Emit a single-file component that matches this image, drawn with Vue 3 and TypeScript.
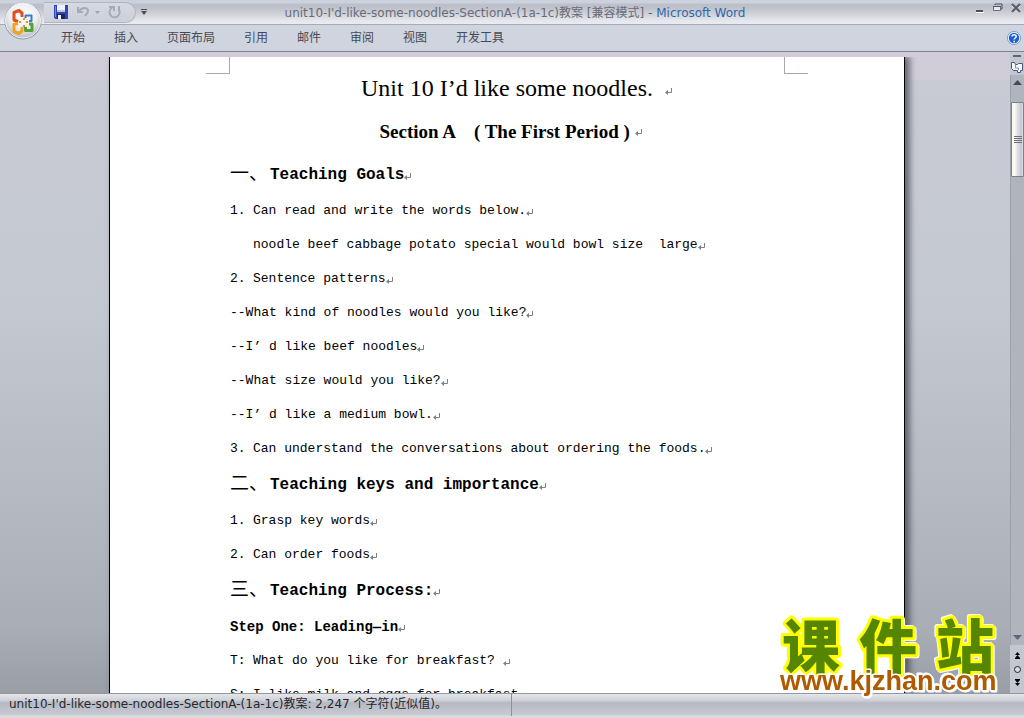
<script setup lang="ts">
import { ref } from 'vue'

type Kind = 'title' | 'section' | 'heading' | 'step' | 'line'

interface Paragraph {
  kind: Kind
  label?: string
  text: string
}

const fileName = "unit10-I'd-like-some-noodles-SectionA-(1a-1c)教案"
const tabs: string[] = ['开始', '插入', '页面布局', '引用', '邮件', '审阅', '视图', '开发工具']
const active = ref<string>('')

const paragraphs: Paragraph[] = [
  { kind: 'title', text: 'Unit 10 I’d like some noodles.' },
  { kind: 'section', text: 'Section A    ( The First Period ) ' },
  { kind: 'heading', label: '一、', text: 'Teaching Goals' },
  { kind: 'line', label: '1.', text: 'Can read and write the words below.' },
  { kind: 'line', label: ' ', text: 'noodle beef cabbage potato special would bowl size  large' },
  { kind: 'line', label: '2.', text: 'Sentence patterns' },
  { kind: 'line', text: '--What kind of noodles would you like?' },
  { kind: 'line', text: '--I’ d like beef noodles' },
  { kind: 'line', text: '--What size would you like?' },
  { kind: 'line', text: '--I’ d like a medium bowl.' },
  { kind: 'line', label: '3.', text: 'Can understand the conversations about ordering the foods.' },
  { kind: 'heading', label: '二、', text: 'Teaching keys and importance' },
  { kind: 'line', label: '1.', text: 'Grasp key words' },
  { kind: 'line', label: '2.', text: 'Can order foods' },
  { kind: 'heading', label: '三、', text: 'Teaching Process:' },
  { kind: 'step', text: 'Step One: Leading—in' },
  { kind: 'line', label: 'T:', text: 'What do you like for breakfast? ' },
  { kind: 'line', label: 'S:', text: 'I like milk and eggs for breakfast. ' },
]

const tagOf = (kind: Kind): string =>
  kind === 'title' ? 'h1' : kind === 'section' ? 'h2' : kind === 'heading' ? 'h3' : 'p'
</script>

<template>
  <div class="window">
    <header class="titlebar">
      <div class="quick">
        <button class="icon-btn" type="button" aria-label="保存">
          <svg width="14" height="14" viewBox="0 0 14 14">
            <path d="M0 0h14v14H1.500L0 12.500z" fill="#3244b8" />
            <path d="M1 1h1v11H1z" fill="#7186e0" />
            <path d="M3 0h8v7H3z" fill="#eef2fd" />
            <path d="M3 5h8v2H3z" fill="#b9c6ec" />
            <path d="M3 9h8v5H3z" fill="#1d2460" />
            <path d="M4 10h3v4H4z" fill="#f4f6fc" />
          </svg>
        </button>
        <button class="icon-btn" type="button" aria-label="撤消">
          <svg width="24" height="14" viewBox="0 0 24 14">
            <path d="M2 2v5h5M3 6c3-4 9-4 9 0 0 2-2 3-3 5" fill="none" stroke="#a4aab8" stroke-width="2" />
            <path d="M19 6h5l-2.500 3z" fill="#9da2ae" />
          </svg>
        </button>
        <button class="icon-btn" type="button" aria-label="重复">
          <svg width="14" height="14" viewBox="0 0 14 14">
            <path d="M4 3a5 5 0 1 0 7 2M6 6V2H1M11 6V1" fill="none" stroke="#a4aab8" stroke-width="2" />
          </svg>
        </button>
      </div>
      <button class="icon-btn more" type="button" aria-label="自定义快速访问工具栏">
        <svg width="6" height="6" viewBox="0 0 6 6">
          <path d="M0 0h6v1H0zM0 2h6L3 6z" fill="#4b505c" />
        </svg>
      </button>
      <div class="caption">
        <span>{{ fileName }} [兼容模式]</span>
        <span class="app-name"> - Microsoft Word</span>
      </div>
      <div class="controls">
        <button class="icon-btn" type="button" aria-label="最小化">
          <svg width="10" height="12" viewBox="0 0 10 12">
            <path d="M1 10h8v1H1z" fill="#fff" />
            <path d="M1 8h7v2H1z" fill="#4a4f5c" />
          </svg>
        </button>
        <button class="icon-btn" type="button" aria-label="还原">
          <svg width="10" height="12" viewBox="0 0 10 12">
            <path d="M2 3V2h7v5H7" fill="none" stroke="#4d5361" />
            <path d="M.5 4.500h7v4h-7z" fill="#e6eaf2" stroke="#66708a" />
            <path d="M0 4h8v1H0z" fill="#4d5361" />
          </svg>
        </button>
        <button class="icon-btn" type="button" aria-label="关闭">
          <svg width="10" height="12" viewBox="0 0 10 12">
            <path d="M1 4l8 7M9 4l-8 7" stroke="#fff" stroke-width="1" />
            <path d="M1 2l8 8M9 2l-8 8" stroke="#525a6b" stroke-width="2" />
          </svg>
        </button>
      </div>
    </header>

    <nav class="ribbon">
      <button
        v-for="tab in tabs"
        :key="tab"
        type="button"
        class="tab"
        :class="{ active: active === tab }"
        @click="active = tab"
      >{{ tab }}</button>
      <button class="icon-btn help" type="button" aria-label="帮助">
        <svg width="14" height="14" viewBox="0 0 14 14">
          <circle cx="7" cy="7" r="6.500" fill="#fff" stroke="#6e9bd0" />
          <circle cx="7" cy="7" r="5.200" fill="#1f5fd6" />
          <path d="M5 5.600c0-2.600 4.200-2.400 4.200 0C9.200 7 7.200 7 7.200 8.500" fill="none" stroke="#fff" stroke-width="1.500" />
          <circle cx="7.200" cy="10.500" r=".9" fill="#fff" />
        </svg>
      </button>
    </nav>

    <button class="office" type="button" aria-label="Office 按钮">
      <svg width="40" height="40" viewBox="0 0 40 40">
        <defs>
          <radialGradient id="orb" cx="50%" cy="35%" r="65%">
            <stop offset="0" stop-color="#ffffff" />
            <stop offset=".6" stop-color="#eceef1" />
            <stop offset="1" stop-color="#b9bdc6" />
          </radialGradient>
        </defs>
        <circle cx="20" cy="20" r="18.500" fill="#8f949e" />
        <circle cx="20" cy="19.500" r="17.500" fill="url(#orb)" stroke="#f3f4f6" />
        <g fill="none" stroke-linejoin="round">
          <path d="M19 16v-4l-3-2.500-5 2v7.500l4 1.500" stroke="#e0501d" stroke-width="3" />
          <path d="M22.500 17v-2.500h6V20H26" stroke="#3a7cc8" stroke-width="2" />
          <path d="M15 22.500l-4 1v7l5 2 3-2.500V26" stroke="#f2a01d" stroke-width="3" />
          <path d="M26 23h3v6.500h-6.500V26" stroke="#54a23a" stroke-width="3" />
          <path d="M16 21h2M23 21h2M21 17v2M21 24v2" stroke="#e8902a" stroke-width="2" />
        </g>
      </svg>
    </button>

    <main class="workspace">
      <div class="canvas">
        <article class="page">
          <i class="corner left"></i>
          <i class="corner right"></i>
          <component
            :is="tagOf(p.kind)"
            v-for="(p, i) in paragraphs"
            :key="i"
            class="para"
            :class="p.kind"
          >
            <span v-if="p.label" class="label">{{ p.label }}</span>
            <span class="text">{{ p.text }}</span>
            <svg class="mark" width="8" height="8" viewBox="0 0 8 8" aria-hidden="true">
              <path d="M6.500 0v4.500H2" fill="none" stroke="#808080" />
              <path d="M0 4.500L3 2v5z" fill="#808080" />
            </svg>
          </component>
        </article>
      </div>
      <aside class="scroll">
        <i class="split"></i>
        <button class="icon-btn view" type="button" aria-label="标尺">
          <svg width="14" height="15" viewBox="0 0 14 15">
            <path d="M1.500 2.500h3l1 2h2l1-1h4v7h-2v2h-3v-2h-4l-2-2z" fill="#f7f8fc" stroke="#46587c" />
            <path d="M5.500 5v3h3v2" fill="none" stroke="#7f90b2" />
          </svg>
        </button>
        <div class="track">
          <button class="icon-btn" type="button" aria-label="向上滚动">
            <svg width="9" height="5" viewBox="0 0 9 5"><path d="M4.500 0L9 5H0z" fill="#444a58" /></svg>
          </button>
          <div class="thumb"><i></i><i></i><i></i><i></i></div>
          <button class="icon-btn down" type="button" aria-label="向下滚动">
            <svg width="9" height="5" viewBox="0 0 9 5"><path d="M0 0h9L4.500 5z" fill="#59677f" /></svg>
          </button>
        </div>
        <div class="browse">
          <button class="icon-btn" type="button" aria-label="前一页">
            <svg width="7" height="7" viewBox="0 0 7 7"><path d="M3.500 0L6 3H1zM3.500 3L6 6H1zM1 6h5v1H1z" fill="#000" /></svg>
          </button>
          <button class="icon-btn" type="button" aria-label="选择浏览对象">
            <svg width="7" height="7" viewBox="0 0 7 7"><circle cx="3.500" cy="3.500" r="3" fill="#d9dbe0" stroke="#222" /></svg>
          </button>
          <button class="icon-btn" type="button" aria-label="下一页">
            <svg width="7" height="7" viewBox="0 0 7 7"><path d="M1 0h5v1H1zM1 1h5L3.500 4zM1 4h5L3.500 7z" fill="#000" /></svg>
          </button>
        </div>
      </aside>
    </main>

    <footer class="status">
      <span class="count">{{ fileName }}: 2,247 个字符(近似值)。</span>
    </footer>

    <svg class="brand" width="236" height="84" viewBox="0 0 236 84">
      <text class="brand-name" x="11 88 165" y="50">课件站</text>
      <text class="brand-url" x="9" y="72">www.kjzhan.com</text>
    </svg>
  </div>
</template>

<style>
body {
  background: #d6d3cc;
}
</style>

<style scoped>
.window {
  position: relative;
  display: flex;
  flex-direction: column;
  height: 100vh;
  overflow: hidden;
  font-family: "DejaVu Sans", "Noto Sans CJK SC", sans-serif;
  font-size: 12px;
  color: #4a4e5a;
}
.icon-btn {
  display: flex;
  align-items: center;
  justify-content: center;
  padding: 0;
  border: 0;
  background: none;
}
.titlebar {
  display: flex;
  flex: none;
  align-items: center;
  box-sizing: border-box;
  height: 25px;
  padding-left: 44px;
  border-bottom: 1px solid #a5aab5;
  background: linear-gradient(#ccd2dd 0 3px, #bdc0c9 4px 7px, #c8cad2 11px, #d6d8de 16px, #e4e6eb 20px, #e8ecf4 24px);
}
.quick {
  display: flex;
  flex: none;
  align-items: center;
  gap: 8px;
  box-sizing: border-box;
  width: 92px;
  height: 21px;
  padding-left: 10px;
  border: 1px solid #b2b6c1;
  border-left: 0;
  border-radius: 0 11px 11px 0;
  background: linear-gradient(#d5d9e1, #cbd0da);
}
.more {
  margin-left: 5px;
}
.caption {
  flex: 1;
  padding: 1px 92px 0 0;
  text-align: center;
  white-space: nowrap;
  line-height: 20px;
  color: #686c77;
}
.app-name {
  color: #2f68a8;
}
.controls {
  display: flex;
  gap: 8px;
  padding: 0 3px 8px 0;
}
.ribbon {
  display: flex;
  flex: none;
  align-items: center;
  gap: 29px;
  box-sizing: border-box;
  height: 27px;
  padding: 0 3px 0 61px;
  border-bottom: 1px solid #7d838e;
  background: #cfd4de;
}
.tab {
  padding: 0;
  border: 0;
  background: none;
  font: inherit;
  line-height: 20px;
  color: #454a57;
}
.tab:hover,
.tab.active {
  color: #1d4f91;
}
.help {
  margin-left: auto;
}
.office {
  position: absolute;
  top: 1px;
  left: 3px;
  padding: 0;
  border: 0;
  border-radius: 50%;
  background: none;
}
.office svg {
  display: block;
}
.workspace {
  display: flex;
  flex: 1;
  min-height: 0;
}
.canvas {
  flex: 1;
  min-width: 0;
  padding: 5px 105px 0 109px;
  overflow: hidden;
  background: linear-gradient(#d0cdd8 0 28px, #c8cbd3 28px, #c4c8d0 40%, #b2b6be 75%, #a9adb5 90%, #999da5);
}
.page {
  position: relative;
  box-sizing: border-box;
  height: 100%;
  padding: 13px 120px 0;
  border: solid #000;
  border-width: 0 1px;
  background: #fff;
  box-shadow: 4px 0 6px 1px rgba(40, 44, 52, 0.6);
  clip-path: inset(0 -14px 0 -14px);
  color: #000;
}
.corner {
  position: absolute;
  top: 0;
  box-sizing: border-box;
  width: 24px;
  height: 17px;
  border-bottom: 1px solid #a4a8b0;
}
.corner.left {
  left: 96px;
  border-right: 1px solid #a4a8b0;
}
.corner.right {
  right: 96px;
  border-left: 1px solid #a4a8b0;
}
.para {
  display: flex;
  align-items: center;
  margin: 0;
  white-space: pre;
  font-family: "Liberation Mono", "Noto Sans CJK SC", monospace;
  font-size: 13px;
  font-weight: 400;
  line-height: 34px;
}
.mark {
  flex: none;
  margin: 3px -8px 0 0;
}
.label {
  flex: none;
  width: 23px;
}
.title {
  justify-content: center;
  font-family: "Liberation Serif", serif;
  font-size: 24px;
  line-height: 37px;
}
.title .mark {
  margin: 6px -20px 0 12px;
}
.section {
  justify-content: center;
  font-family: "Liberation Serif", serif;
  font-size: 19px;
  font-weight: 700;
  line-height: 49px;
}
.heading {
  font-size: 16px;
  font-weight: 700;
  line-height: 38px;
}
.heading .label {
  width: 40px;
  font-size: 19px;
  font-weight: 400;
}
.step {
  font-size: 14px;
  font-weight: 700;
}
.scroll {
  display: flex;
  flex: none;
  flex-direction: column;
  width: 14px;
  padding-top: 3px;
  background: #c3c7d0;
}
.split {
  flex: none;
  width: 8px;
  height: 2px;
  margin: 0 3px 3px;
  background: #60646e;
}
.view {
  flex: none;
}
.track {
  display: flex;
  flex: 1;
  flex-direction: column;
  align-items: center;
  box-sizing: border-box;
  padding: 5px 0;
  border-left: 1px solid #9ba0aa;
  background: #b0b4bd;
}
.thumb {
  display: flex;
  flex-direction: column;
  align-items: center;
  justify-content: center;
  gap: 1px;
  box-sizing: border-box;
  width: 13px;
  height: 75px;
  margin-top: 17px;
  border: 1px solid #7c808a;
  border-radius: 1px;
  background: linear-gradient(90deg, #fbf8ef 0 3px, #e2e4ea 5px, #c4c8d4 9px, #dcdfe6);
}
.thumb i {
  width: 8px;
  height: 1px;
  background: #6d7079;
}
.down {
  margin-top: auto;
}
.browse {
  display: flex;
  flex: none;
  flex-direction: column;
  align-items: center;
  justify-content: space-evenly;
  height: 48px;
}
.status {
  display: flex;
  flex: none;
  box-sizing: border-box;
  height: 25px;
  border-top: 1px solid #94979f;
  border-bottom: 2px solid #dcdad5;
  background: linear-gradient(#e4e6ea, #d0d3d9 6px, #b6b9c2 9px, #c6c9d3 20px, #d6d9e0);
  color: #25282f;
}
.count {
  box-sizing: border-box;
  width: 50%;
  padding-left: 9px;
  border-right: 1px solid #8c9099;
  white-space: nowrap;
  line-height: 20px;
}
.brand {
  position: absolute;
  right: 17px;
  bottom: 16px;
  overflow: visible;
  filter: drop-shadow(1px 1px 0 #fff) drop-shadow(-1px -1px 0 #fff);
}
.brand-name {
  font-family: "Noto Sans CJK SC", sans-serif;
  font-size: 58px;
  font-weight: 900;
  fill: #568500;
  stroke: #ffff00;
  stroke-width: 6px;
  stroke-linejoin: round;
  paint-order: stroke;
}
.brand-url {
  font-family: "Liberation Sans", sans-serif;
  font-size: 27px;
  font-weight: 700;
  fill: #b05a00;
  stroke: #fff;
  stroke-width: 3px;
  stroke-linejoin: round;
  paint-order: stroke;
}
</style>
